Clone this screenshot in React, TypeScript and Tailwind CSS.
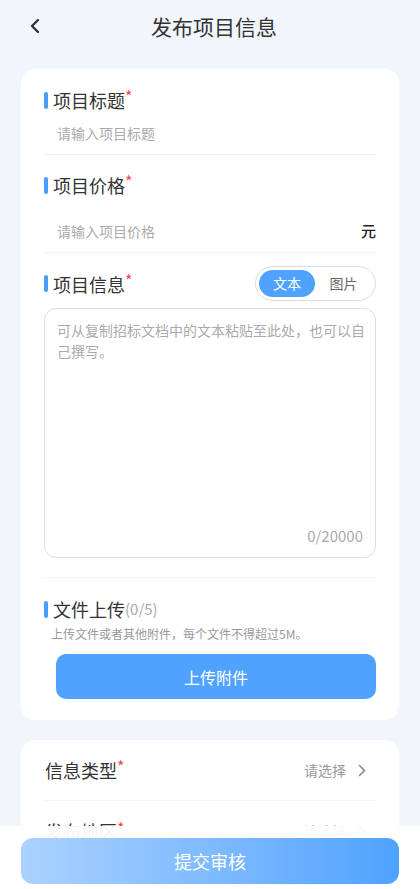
const font = "font-['Noto_Sans_CJK_SC','Noto_Sans',sans-serif]";

function Star() {
  return <span className="relative -top-[4px] text-[16px] leading-4 text-[#f44]">*</span>;
}

function Label({ text, required = true, extra }: { text: string; required?: boolean; extra?: string }) {
  return (
    <div className="flex h-6 items-center">
      <span className="mr-[5px] h-[17px] w-[4px] rounded-full bg-[#4a9dff]" />
      <span className="text-[18px] leading-6 text-[#333]">{text}</span>
      {required && <Star />}
      {extra && <span className="text-[15px] leading-6 text-[#aaa]">{extra}</span>}
    </div>
  );
}

const selectRows = ["信息类型", "发布地区"];

export default function App() {
  return (
    <div className={`relative h-[889px] overflow-hidden bg-[#f1f5fc] ${font}`}>
      <header className="relative flex h-[52px] items-center justify-center">
        <svg className="absolute left-[28px] top-[18px]" width="14" height="16" viewBox="0 0 14 16" fill="none">
          <path d="M10 2 L4 8 L10 14" stroke="#333" strokeWidth="2.4" strokeLinecap="round" strokeLinejoin="round" />
        </svg>
        <h1 className="pl-[8px] text-[21px] leading-[52px] text-[#333]">发布项目信息</h1>
      </header>

      <div className="px-[21px] pt-[17px]">
        <section className="rounded-[14px] bg-white px-[23px] pb-[21px] pt-[19px]">
          <Label text="项目标题" />
          <div className="flex h-[43px] items-center border-b border-[#f0f0f0] pl-[13px] text-[14px] text-[#aaa]">
            请输入项目标题
          </div>

          <div className="mt-[18px]">
            <Label text="项目价格" />
          </div>
          <div className="mt-[13px] flex h-[43px] items-center justify-between border-b border-[#f0f0f0] pl-[13px]">
            <span className="text-[14px] text-[#aaa]">请输入项目价格</span>
            <span className="text-[15px] font-medium text-[#222]">元</span>
          </div>

          <div className="mt-[13px] flex h-[35px] items-center justify-between">
            <Label text="项目信息" />
            <div className="flex h-[35px] w-[121px] items-center rounded-full border border-[#ddd] p-[3px]">
              <span className="flex h-[27px] w-[56px] items-center justify-center rounded-full bg-[#4fa3ff] text-[14px] text-white">
                文本
              </span>
              <span className="flex flex-1 items-center justify-center text-[14px] text-[#666]">图片</span>
            </div>
          </div>

          <div className="mt-[7px] flex h-[250px] flex-col justify-between rounded-[12px] border border-[#ddd] pb-[10px] pl-[12px] pr-[8px] pt-[11px]">
            <p className="text-[14px] leading-[21px] text-[#aaa]">
              可从复制招标文档中的文本粘贴至此处，也可以自己撰写。
            </p>
            <p className="pr-[4px] text-right text-[15px] text-[#aaa]">0/20000</p>
          </div>

          <div className="mt-[19px] h-px bg-[#f3f3f3]" />

          <div className="mt-[19px]">
            <Label text="文件上传" required={false} extra="(0/5)" />
          </div>
          <p className="mt-[4px] pl-[7px] text-[12px] leading-[18px] text-[#999]">
            上传文件或者其他附件，每个文件不得超过5M。
          </p>
          <button className="ml-[12px] mt-[11px] flex h-[45px] w-[320px] items-center justify-center rounded-[10px] bg-[#4fa3ff] text-[16px] text-white">
            上传附件
          </button>
        </section>

        <section className="mt-5 rounded-[14px] bg-white px-6">
          {selectRows.map((row, i) => (
            <div
              key={row}
              className={`flex h-[61px] items-center justify-between ${i < selectRows.length - 1 ? "border-b border-[#f3f3f3]" : ""}`}
            >
              <div className="flex items-center">
                <span className="text-[18px] text-[#333]">{row}</span>
                <Star />
              </div>
              <div className="mr-[9px] flex items-center gap-[12px] text-[14px] text-[#999]">
                <span>请选择</span>
                <svg width="8" height="13" viewBox="0 0 8 13" fill="none">
                  <path d="M1.5 1.5 L6.5 6.5 L1.5 11.5" stroke="#888" strokeWidth="1.6" strokeLinecap="round" strokeLinejoin="round" />
                </svg>
              </div>
            </div>
          ))}
        </section>
      </div>

      <div className="absolute inset-x-0 bottom-0 h-[63px] bg-white/95 px-[21px] pt-[12px]">
        <button className="flex h-[46px] w-full items-center justify-center rounded-[12px] bg-gradient-to-r from-[#abd2ff] to-[#4ea2ff] text-[18px] text-white">
          提交审核
        </button>
      </div>
    </div>
  );
}
